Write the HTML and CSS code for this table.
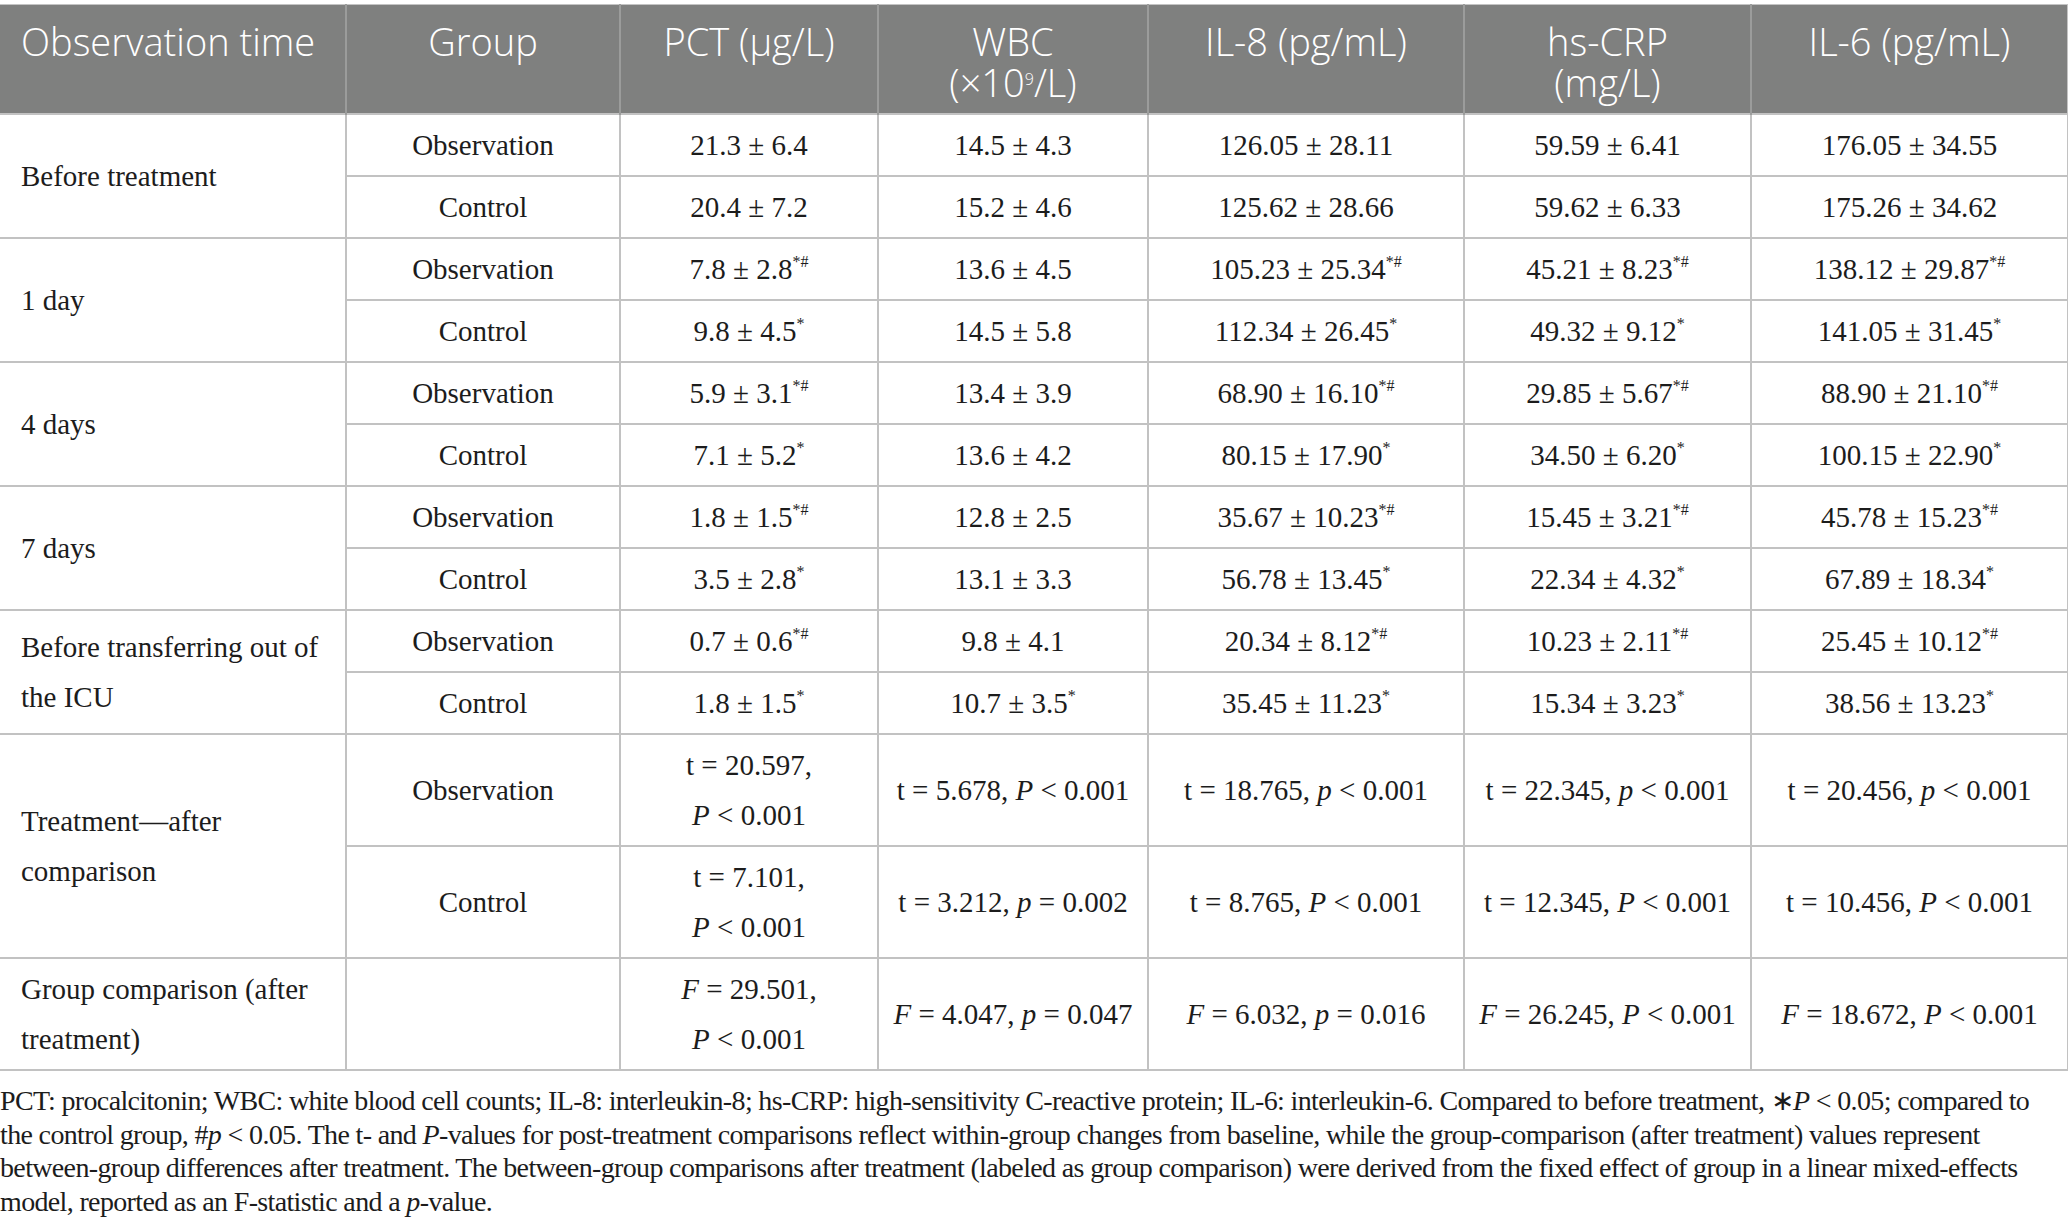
FILE: index.html
```html
<!DOCTYPE html>
<html lang="en">
<head>
<meta charset="utf-8">
<title>Table</title>
<link rel="stylesheet" href="styles.css">
</head>
<body>
<table class="data">
  <colgroup>
    <col class="c1"><col class="c2"><col class="c3"><col class="c4"><col class="c5"><col class="c6"><col class="c7">
  </colgroup>
  <thead>
    <tr>
      <th class="first">Observation time</th>
      <th>Group</th>
      <th>PCT (μg/L)</th>
      <th>WBC<br>(×10<sup class="hsup">9</sup>/L)</th>
      <th>IL-8 (pg/mL)</th>
      <th>hs-CRP<br>(mg/L)</th>
      <th>IL-6 (pg/mL)</th>
    </tr>
  </thead>
  <tbody>
    <tr class="single">
      <td class="first" rowspan="2">Before treatment</td>
      <td>Observation</td><td>21.3 ± 6.4</td><td>14.5 ± 4.3</td><td>126.05 ± 28.11</td><td>59.59 ± 6.41</td><td>176.05 ± 34.55</td>
    </tr>
    <tr class="single">
      <td>Control</td><td>20.4 ± 7.2</td><td>15.2 ± 4.6</td><td>125.62 ± 28.66</td><td>59.62 ± 6.33</td><td>175.26 ± 34.62</td>
    </tr>
    <tr class="single">
      <td class="first" rowspan="2">1 day</td>
      <td>Observation</td><td>7.8 ± 2.8<sup>*#</sup></td><td>13.6 ± 4.5</td><td>105.23 ± 25.34<sup>*#</sup></td><td>45.21 ± 8.23<sup>*#</sup></td><td>138.12 ± 29.87<sup>*#</sup></td>
    </tr>
    <tr class="single">
      <td>Control</td><td>9.8 ± 4.5<sup>*</sup></td><td>14.5 ± 5.8</td><td>112.34 ± 26.45<sup>*</sup></td><td>49.32 ± 9.12<sup>*</sup></td><td>141.05 ± 31.45<sup>*</sup></td>
    </tr>
    <tr class="single">
      <td class="first" rowspan="2">4 days</td>
      <td>Observation</td><td>5.9 ± 3.1<sup>*#</sup></td><td>13.4 ± 3.9</td><td>68.90 ± 16.10<sup>*#</sup></td><td>29.85 ± 5.67<sup>*#</sup></td><td>88.90 ± 21.10<sup>*#</sup></td>
    </tr>
    <tr class="single">
      <td>Control</td><td>7.1 ± 5.2<sup>*</sup></td><td>13.6 ± 4.2</td><td>80.15 ± 17.90<sup>*</sup></td><td>34.50 ± 6.20<sup>*</sup></td><td>100.15 ± 22.90<sup>*</sup></td>
    </tr>
    <tr class="single">
      <td class="first" rowspan="2">7 days</td>
      <td>Observation</td><td>1.8 ± 1.5<sup>*#</sup></td><td>12.8 ± 2.5</td><td>35.67 ± 10.23<sup>*#</sup></td><td>15.45 ± 3.21<sup>*#</sup></td><td>45.78 ± 15.23<sup>*#</sup></td>
    </tr>
    <tr class="single">
      <td>Control</td><td>3.5 ± 2.8<sup>*</sup></td><td>13.1 ± 3.3</td><td>56.78 ± 13.45<sup>*</sup></td><td>22.34 ± 4.32<sup>*</sup></td><td>67.89 ± 18.34<sup>*</sup></td>
    </tr>
    <tr class="single">
      <td class="first" rowspan="2">Before transferring out of<br>the ICU</td>
      <td>Observation</td><td>0.7 ± 0.6<sup>*#</sup></td><td>9.8 ± 4.1</td><td>20.34 ± 8.12<sup>*#</sup></td><td>10.23 ± 2.11<sup>*#</sup></td><td>25.45 ± 10.12<sup>*#</sup></td>
    </tr>
    <tr class="single">
      <td>Control</td><td>1.8 ± 1.5<sup>*</sup></td><td>10.7 ± 3.5<sup>*</sup></td><td>35.45 ± 11.23<sup>*</sup></td><td>15.34 ± 3.23<sup>*</sup></td><td>38.56 ± 13.23<sup>*</sup></td>
    </tr>
    <tr class="double">
      <td class="first" rowspan="2">Treatment—after<br>comparison</td>
      <td>Observation</td><td>t = 20.597,<br><i>P</i> &lt; 0.001</td><td>t = 5.678, <i>P</i> &lt; 0.001</td><td>t = 18.765, <i>p</i> &lt; 0.001</td><td>t = 22.345, <i>p</i> &lt; 0.001</td><td>t = 20.456, <i>p</i> &lt; 0.001</td>
    </tr>
    <tr class="double">
      <td>Control</td><td>t = 7.101,<br><i>P</i> &lt; 0.001</td><td>t = 3.212, <i>p</i> = 0.002</td><td>t = 8.765, <i>P</i> &lt; 0.001</td><td>t = 12.345, <i>P</i> &lt; 0.001</td><td>t = 10.456, <i>P</i> &lt; 0.001</td>
    </tr>
    <tr class="double">
      <td class="first">Group comparison (after<br>treatment)</td>
      <td></td><td><i>F</i> = 29.501,<br><i>P</i> &lt; 0.001</td><td><i>F</i> = 4.047, <i>p</i> = 0.047</td><td><i>F</i> = 6.032, <i>p</i> = 0.016</td><td><i>F</i> = 26.245, <i>P</i> &lt; 0.001</td><td><i>F</i> = 18.672, <i>P</i> &lt; 0.001</td>
    </tr>
  </tbody>
</table>
<p class="note">PCT: procalcitonin; WBC: white blood cell counts; IL-8: interleukin-8; hs-CRP: high-sensitivity C-reactive protein; IL-6: interleukin-6. Compared to before treatment, ∗<i>P</i> &lt; 0.05; compared to<br>the control group, #<i>p</i> &lt; 0.05. The t- and <i>P</i>-values for post-treatment comparisons reflect within-group changes from baseline, while the group-comparison (after treatment) values represent<br>between-group differences after treatment. The between-group comparisons after treatment (labeled as group comparison) were derived from the fixed effect of group in a linear mixed-effects<br>model, reported as an F-statistic and a <i>p</i>-value.</p>
</body>
</html>
```

FILE: styles.css
```css
html, body {
  margin: 0;
  padding: 0;
  background: #ffffff;
}

body {
  padding-top: 4px;
  font-family: "Liberation Serif", "Times New Roman", serif;
  color: #1c1c1c;
}

.data {
  width: 2068px;
  border-collapse: collapse;
  table-layout: fixed;
}

.c1 { width: 346px; }
.c2 { width: 274px; }
.c3 { width: 258px; }
.c4 { width: 270px; }
.c5 { width: 316px; }
.c6 { width: 287px; }
.c7 { width: 317px; }

.data th {
  background: #7f807f;
  color: #ffffff;
  font-family: "Open Sans", "Noto Sans", sans-serif;
  font-weight: 300;
  font-size: 38px;
  line-height: 41px;
  height: 109px;
  box-sizing: border-box;
  padding: 16px 6px 10px;
  vertical-align: top;
  text-align: center;
  border-left: 2px solid #9b9c9b;
  border-top: 1px solid #c4c4c4;
}

.data th.first {
  text-align: left;
  padding-left: 21px;
  border-left: none;
}

.data th:last-child {
  border-right: 2px solid #c4c4c4;
}

.hsup {
  font-size: 0.62em;
  line-height: 0;
  vertical-align: 0.65em;
}

.data td {
  font-size: 29px;
  line-height: 50px;
  text-align: center;
  vertical-align: middle;
  padding: 0 8px;
  border: 2px solid #c2c2c2;
  box-sizing: border-box;
}

.data td.first {
  text-align: left;
  padding-left: 21px;
  border-left: none;
}

.data td:last-child {
  border-right: 2px solid #c2c2c2;
}

.single {
  height: 62px;
}

.double {
  height: 112px;
}

.data sup {
  font-size: 16px;
  line-height: 0;
  vertical-align: 12px;
}

.note {
  margin: 13px 0 0 0;
  font-size: 28px;
  line-height: 33.5px;
  letter-spacing: -0.65px;
  white-space: nowrap;
  color: #1c1c1c;
}
```
